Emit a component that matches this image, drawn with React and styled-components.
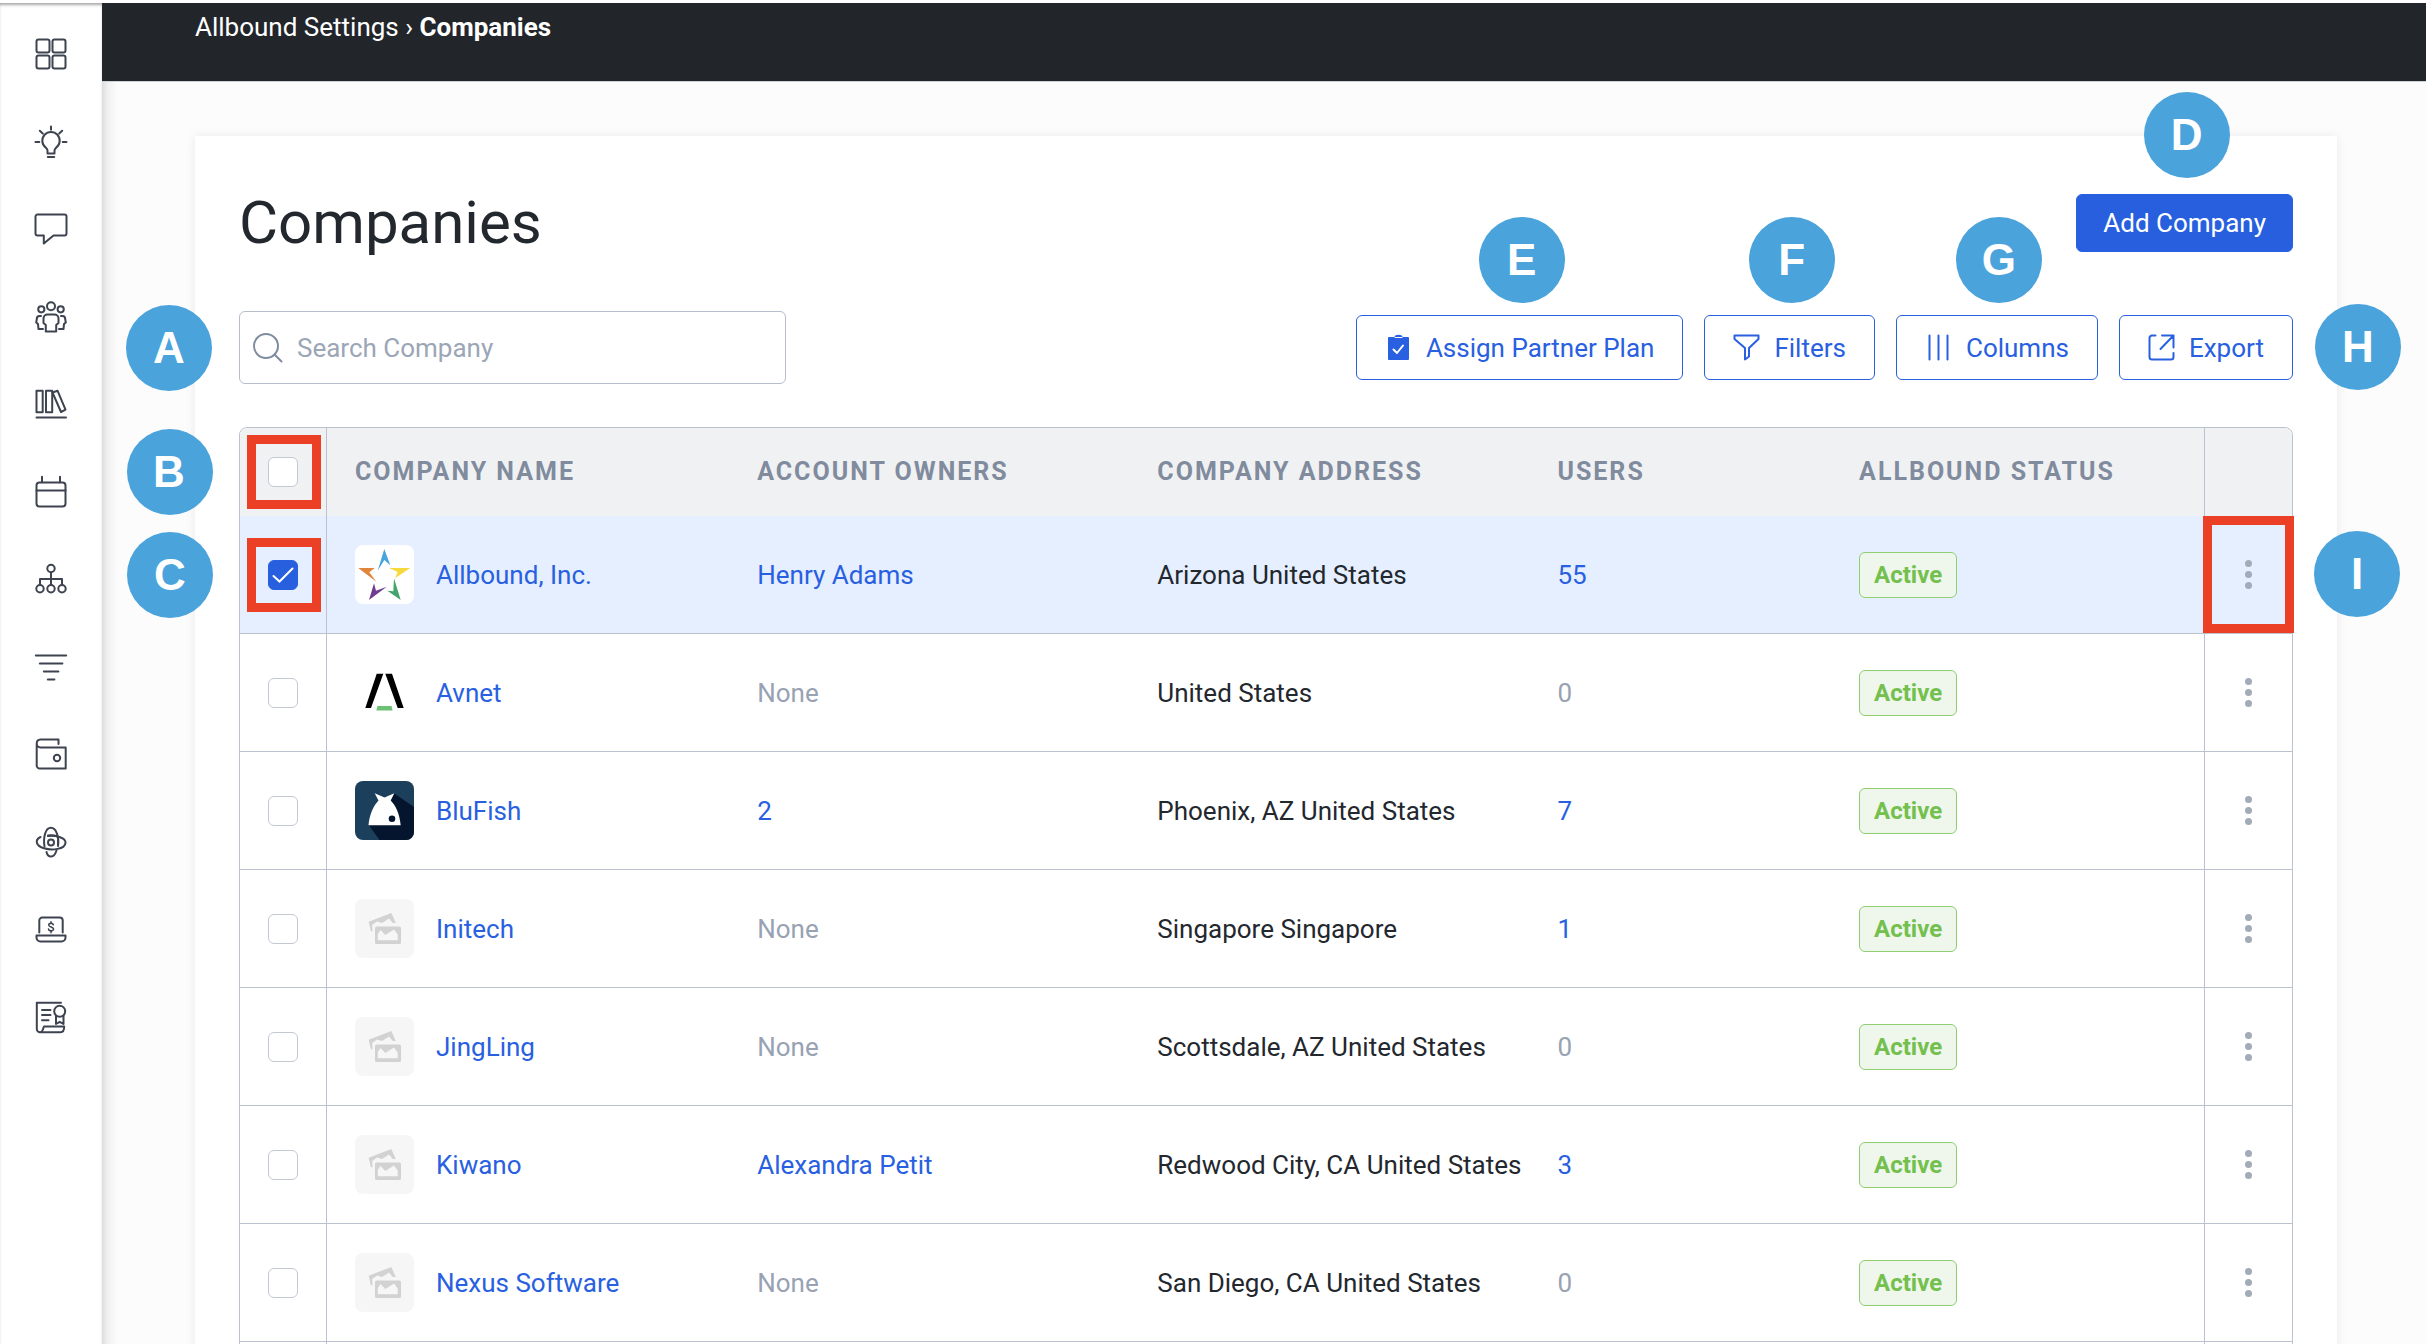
import React, { useState } from 'react'
import styled, { createGlobalStyle, css } from 'styled-components'

const GlobalStyle = createGlobalStyle`
  * {
    box-sizing: border-box;
  }

  body {
    margin: 0;
    background: #ffffff;
    color: #23272e;
    font-family: Roboto, 'Liberation Sans', sans-serif;
    font-size: 26px;
    line-height: 30px;
  }

  button,
  input {
    font: inherit;
  }
`

const Shell = styled.div`
  display: flex;
  height: 100vh;
  padding-top: 3px;
  overflow: hidden;
`

const Sidebar = styled.nav`
  flex: none;
  width: 102px;
  padding-top: 35px;
  background: #ffffff;
  box-shadow: inset 0 3px 3px -1px #a9a9a9;
`

const SidebarList = styled.ul`
  display: flex;
  flex-direction: column;
  align-items: center;
  justify-content: space-between;
  height: 74vh;
  margin: 0;
  padding: 0;
  list-style: none;
`

const SidebarLink = styled.a`
  display: block;
  width: 32px;
  height: 32px;
  color: #3d4450;

  svg {
    display: block;
    overflow: visible;
  }
`

const Main = styled.main`
  flex: 1;
  min-width: 0;
  background: linear-gradient(to right, #dedede, #f1f1f1 6px, #fcfcfc 16px);
`

const TopBar = styled.header`
  height: 79px;
  padding: 9px 93px 0;
  border-bottom: 1px solid #cdd1d8;
  background: #22262b;
  color: #ffffff;
`

const CrumbLink = styled.a`
  color: inherit;
  text-decoration: none;
`

const Card = styled.section`
  margin: 54px 89px 0 93px;
  padding: 52px 44px 44px;
  background: #ffffff;
  box-shadow: 0 0 10px rgba(0, 0, 0, 0.08);
`

const TitleRow = styled.div`
  display: flex;
  align-items: center;
  justify-content: space-between;
`

const Title = styled.h1`
  margin: 0;
  font-size: 60px;
  font-weight: 400;
  line-height: 70px;
`

const Toolbar = styled.div`
  display: flex;
  align-items: center;
  gap: 21px;
  margin: 53px 0 43px;
`

const Anchor = styled.div`
  position: relative;
`

const badgePlaces = {
  left: css`
    right: calc(100% + 27px);
    top: calc(50% - 43px);
  `,
  right: css`
    left: calc(100% + 22px);
    top: calc(50% - 44px);
  `,
  above: css`
    left: calc(50% - 41px);
    bottom: calc(100% + ${({ $gap }) => $gap || 12}px);
  `,
}

const Badge = styled.span`
  position: absolute;
  z-index: 2;
  display: flex;
  align-items: center;
  justify-content: center;
  width: 86px;
  height: 86px;
  border-radius: 50%;
  background: #4ba3dc;
  color: #ffffff;
  font-family: 'Liberation Sans', Arial, sans-serif;
  font-size: 44px;
  font-weight: 700;
  line-height: 50px;
  ${({ $place }) => badgePlaces[$place]}
`

const Outline = styled.span`
  position: absolute;
  z-index: 1;
  border: 9px solid #eb4025;
  pointer-events: none;
  ${({ $full }) =>
    $full
      ? css`
          inset: 0 -2px 0 -2px;
        `
      : css`
          left: calc(50% - 36px);
          top: calc(50% - 37px);
          width: 74px;
          height: 74px;
        `}
`

const SearchBox = styled.label`
  display: flex;
  align-items: center;
  gap: 14px;
  width: 547px;
  height: 73px;
  padding: 0 13px;
  border: 1px solid #b7bdcc;
  border-radius: 6px;
  background: #ffffff;
  color: #7f8b9f;
`

const SearchInput = styled.input`
  flex: 1;
  min-width: 0;
  padding: 0;
  border: 0;
  outline: 0;
  background: transparent;
  color: #23272e;

  &::placeholder {
    color: #9ba6b6;
    opacity: 1;
  }
`

const Spacer = styled.div`
  flex: 1;
`

const Button = styled.button`
  display: flex;
  align-items: center;
  gap: 14px;
  height: 65px;
  padding: 0 28px;
  border: 1px solid #2860e1;
  border-radius: 6px;
  background: #ffffff;
  color: #2860e1;
  white-space: nowrap;
`

const PrimaryButton = styled(Button)`
  height: 58px;
  padding: 0 26px;
  background: #275fdf;
  color: #ffffff;
`

const Table = styled.table`
  width: 100%;
  border: 1px solid #bcc1cf;
  border-radius: 8px;
  border-spacing: 0;
  table-layout: fixed;
`

const Col = styled.col`
  width: ${({ $width }) => $width};
`

const HeadCell = styled.th`
  position: relative;
  height: 88px;
  padding: 0 28px;
  background: #f0f1f3;
  color: #808b9e;
  font-size: 25px;
  font-weight: 700;
  letter-spacing: 2px;
  text-align: left;
  text-transform: uppercase;
  white-space: nowrap;

  &:first-child {
    padding: 0;
    border-right: 1px solid #bcc1cf;
    border-radius: 7px 0 0 0;
  }

  &:last-child {
    padding: 0;
    border-left: 1px solid #bcc1cf;
    border-radius: 0 7px 0 0;
  }
`

const Row = styled.tr`
  background: ${({ $selected }) => ($selected ? '#e6efff' : '#ffffff')};
`

const Cell = styled.td`
  position: relative;
  height: 118px;
  padding: 0 28px;
  border-bottom: 1px solid #bcc1cf;
  color: ${({ $muted }) => ($muted ? '#98a2b3' : 'inherit')};
  white-space: nowrap;

  &:first-child {
    padding: 0;
    border-right: 1px solid #bcc1cf;
  }

  &:last-child {
    padding: 0;
    border-left: 1px solid #bcc1cf;
  }
`

const CompanyCell = styled.div`
  display: flex;
  align-items: center;
  gap: 22px;
`

const Avatar = styled.span`
  display: block;
  width: 59px;
  height: 59px;
  border-radius: 8px;
  background: ${({ $color }) => $color};
  overflow: hidden;

  svg {
    display: block;
  }
`

const TextLink = styled.a`
  color: #2860e1;
  text-decoration: none;
`

const Checkbox = styled.input.attrs({ type: 'checkbox' })`
  display: block;
  width: 30px;
  height: 30px;
  margin: 0 auto;
  border: 1px solid #c3c8d3;
  border-radius: 6px;
  background: #ffffff;
  appearance: none;

  &:checked {
    border-color: #2860e1;
    background: #275fdf
      url("data:image/svg+xml,%3Csvg xmlns='http://www.w3.org/2000/svg' viewBox='0 0 28 28'%3E%3Cpath d='M4.500 15l6 5.500L23.500 7.500' fill='none' stroke='white' stroke-width='2' stroke-linecap='round'/%3E%3C/svg%3E")
      center / 28px 28px no-repeat;
  }
`

const Status = styled.span`
  display: inline-block;
  padding: 7px 14px;
  border: 1px solid #8fce72;
  border-radius: 6px;
  background: #eff6eb;
  color: #73c04e;
  font-weight: 700;
  font-size: 24px;
  vertical-align: middle;
`

const MenuButton = styled.button`
  display: flex;
  flex-direction: column;
  align-items: center;
  gap: 4px;
  margin: 0 auto;
  padding: 10px;
  border: 0;
  background: none;
`

const Dot = styled.span`
  width: 7px;
  height: 7px;
  border-radius: 50%;
  background: #a2abb8;
`

const sidebarIcons = [
  {
    label: 'Dashboard',
    art: (
      <>
        <rect x="1.500" y="1.500" width="13" height="13" rx="2" />
        <rect x="17.500" y="1.500" width="13" height="13" rx="2" />
        <rect x="1.500" y="17.500" width="13" height="13" rx="2" />
        <rect x="17.500" y="17.500" width="13" height="13" rx="2" />
      </>
    ),
  },
  {
    label: 'Ideas',
    art: (
      <>
        <path d="M12.500 27.500v-3c0-1.500-.8-2-1.800-3a8.700 8.700 0 1 1 10.600 0c-1 1-1.800 1.500-1.800 3v3z" />
        <path d="M12.800 31h6.400M16 .5v3.200M.5 16h3.800M27.700 16h3.800M4.800 4.800l3 2.800M27.200 4.800l-3 2.800" />
      </>
    ),
  },
  {
    label: 'Messages',
    art: (
      <path d="M2.500 1.500h27a2 2 0 0 1 2 2v17a2 2 0 0 1-2 2H18.500L8.800 30.500v-8H2.500a2 2 0 0 1-2-2v-17a2 2 0 0 1 2-2z" />
    ),
  },
  {
    label: 'Partners',
    art: (
      <>
        <circle cx="16" cy="5.300" r="4" />
        <circle cx="6.300" cy="8.300" r="3.100" />
        <circle cx="25.700" cy="8.300" r="3.100" />
        <path d="M12.500 13.500h7a4 4 0 0 1 4 4v4.500l-2.300 2v6.500H10.800V24l-2.300-2v-4.500a4 4 0 0 1 4-4z" />
        <path d="M6 15H4.500C2.500 15 1.800 16.500 1.800 18l-.6 3.500 1.800 1.600.5 5H8M26 15h1.500c2 0 2.700 1.500 2.700 3l.6 3.500-1.800 1.600-.5 5H24" />
      </>
    ),
  },
  {
    label: 'Library',
    art: (
      <>
        <rect x="1.500" y="2.800" width="6.200" height="21.500" />
        <rect x="11" y="2.800" width="6.200" height="21.500" />
        <path d="M17.500 4.500l5-1.800L30.500 21.700l-4.500 2.300zM1.500 29.500h29.500" />
      </>
    ),
  },
  {
    label: 'Calendar',
    art: (
      <>
        <rect x="1.500" y="6.500" width="29" height="24" rx="3" />
        <path d="M1.500 14.500h29M7 .8v5.500M25 .8v5.500" />
      </>
    ),
  },
  {
    label: 'Structure',
    art: (
      <>
        <circle cx="16" cy="5.500" r="3.700" />
        <circle cx="5" cy="25.800" r="3.700" />
        <circle cx="16" cy="25.800" r="3.700" />
        <circle cx="27" cy="25.800" r="3.700" />
        <path d="M16 9.500v12.500M5 21v-5h22v5" />
      </>
    ),
  },
  {
    label: 'Pipeline',
    art: <path d="M.8 4.500h30.400M4.800 12.500h22.600M8.800 20.500h14.600M12.800 28.500h6.600" />,
  },
  {
    label: 'Wallet',
    art: (
      <>
        <path d="M23.500 6V1.500H5.500a4 4 0 0 0-3.800 3.800v22.200a3 3 0 0 0 3 3h26V9.500H5.500A4 4 0 0 1 1.700 5.500" />
        <circle cx="22" cy="20" r="3.200" />
      </>
    ),
  },
  {
    label: 'Network',
    art: (
      <>
        <circle cx="16" cy="16.500" r="3" />
        <path d="M5.500 11C-1 14.500 1.500 20 9 22.300c8 2.400 21 1 21.500-5.500C30.700 11.500 20 9 13 10" />
        <path d="M21.500 24.500C19 32.500 13 32 11.500 26M23 20C24.500 11 21 1.800 16 1.800 10.500 1.800 8 11 9.500 20.500M13 9.500c3-.3 10-.3 10 2.500v8" />
      </>
    ),
  },
  {
    label: 'Commissions',
    art: (
      <>
        <path d="M4.300 19.500V7.500a3 3 0 0 1 3-3h17.400a3 3 0 0 1 3 3v12M1.500 22.500h29v2a4 4 0 0 1-4 4h-21a4 4 0 0 1-4-4z" />
        <path
          d="M18.300 11.800c-.5-2-4.600-1.900-4.600.2 0 2.600 4.900 1.500 4.900 4.100 0 2.300-4.800 2.200-5.100 0M16 8.700v1.700M16 18v1.700"
          strokeWidth="1.500"
        />
      </>
    ),
  },
  {
    label: 'Certificates',
    art: (
      <>
        <path d="M26 1.800H1.800v26.200a3.200 3.200 0 0 0 3.200 3.200h20.500c2.500 0 3.700-2 3.700-5.700H9c-.8 0-.6 5.700-4 5.700" />
        <path d="M7 9h8.500M7 14h8.500M7 19.200h6.500M21 14.800V23l3.700-2.200L28.500 23v-8.200" />
        <circle cx="24.700" cy="10.300" r="5.500" />
      </>
    ),
  },
]

const logos = {
  allbound: {
    color: '#ffffff',
    art: (
      <>
        <path fill="#46a5dc" d="M29.300 4l6 16.300-6-5.300-6.600 10.700z" />
        <path fill="#f6da3c" d="M34 23h21.300L40 33.300l2.700-6.300z" />
        <path fill="#43a56b" d="M39 33.300L45.700 55 32.300 45.700l6 .6z" />
        <path fill="#6f3c90" d="M19 38.300L14 55l17.700-13.300-10.700 4z" />
        <path fill="#e0853a" d="M3.300 23h16.400l-5.400 4.300 7 9.400z" />
      </>
    ),
  },
  avnet: {
    color: '#ffffff',
    art: (
      <>
        <path d="M10.300 45H16L28.300 10.700h-6.600zM30.300 10.700H37L48.700 45h-6z" />
        <path fill="#6cc177" d="M22.500 43h14l1 4.500H21.300z" />
      </>
    ),
  },
  blufish: {
    color: '#1c3f5b',
    art: (
      <>
        <path fill="#04152d" d="M39 12.300L59 26v33H24.500L13.700 44l20-20z" />
        <path
          fill="#ffffff"
          d="M13.500 44.200C14.500 33 18.500 25 23.500 19.500L19.700 12.300l9.800 4.200 9.800-4.200-3.600 7.200C41 25 44.700 33 45.700 44.200z"
        />
        <circle cx="37" cy="37.700" r="3.300" fill="#04152d" />
      </>
    ),
  },
  empty: {
    color: '#f6f6f6',
    art: (
      <>
        <path
          fill="#d2d2d2"
          d="M13.700 22.700L36.300 14l4.500 10h-3l-3.800-4.500L27 24l-5-1.500-4.800 3.500.3 6.500-1.700-.5z"
        />
        <rect x="20" y="27.500" width="26" height="17.500" rx="1.500" fill="#d2d2d2" />
        <path fill="#f6f6f6" d="M22.800 41.200V35l2.700-4 4.800 5 8.700-5.500 3.700 5v5.700z" />
      </>
    ),
  },
}

const companies = [
  { name: 'Allbound, Inc.', logo: 'allbound', owner: 'Henry Adams', address: 'Arizona United States', users: 55 },
  { name: 'Avnet', logo: 'avnet', address: 'United States', users: 0 },
  { name: 'BluFish', logo: 'blufish', owner: '2', address: 'Phoenix, AZ United States', users: 7 },
  { name: 'Initech', logo: 'empty', address: 'Singapore Singapore', users: 1 },
  { name: 'JingLing', logo: 'empty', address: 'Scottsdale, AZ United States', users: 0 },
  { name: 'Kiwano', logo: 'empty', owner: 'Alexandra Petit', address: 'Redwood City, CA United States', users: 3 },
  { name: 'Nexus Software', logo: 'empty', address: 'San Diego, CA United States', users: 0 },
]

function LineIcon({ size = 27, children }) {
  return (
    <svg
      width={size}
      height={size}
      viewBox={`0 0 ${size} ${size}`}
      fill="none"
      stroke="currentColor"
      strokeWidth="2"
      strokeLinecap="round"
      strokeLinejoin="round"
      aria-hidden="true"
    >
      {children}
    </svg>
  )
}

function ToolButton({ label, badge, place = 'above', children }) {
  return (
    <Anchor>
      <Button type="button">
        <LineIcon>{children}</LineIcon>
        {label}
      </Button>
      <Badge $place={place}>{badge}</Badge>
    </Anchor>
  )
}

function CompanyRow({ company, first, selected, onToggle }) {
  const { name, logo, owner, address, users } = company
  return (
    <Row $selected={selected}>
      <Cell>
        <Checkbox aria-label={`Select ${name}`} checked={selected} onChange={onToggle} />
        {first && (
          <>
            <Outline />
            <Badge $place="left">C</Badge>
          </>
        )}
      </Cell>
      <Cell>
        <CompanyCell>
          <Avatar $color={logos[logo].color}>
            <svg width="59" height="59" viewBox="0 0 59 59" aria-hidden="true">
              {logos[logo].art}
            </svg>
          </Avatar>
          <TextLink href="#company">{name}</TextLink>
        </CompanyCell>
      </Cell>
      <Cell $muted={!owner}>{owner ? <TextLink href="#owners">{owner}</TextLink> : 'None'}</Cell>
      <Cell>{address}</Cell>
      <Cell $muted={!users}>{users ? <TextLink href="#users">{users}</TextLink> : users}</Cell>
      <Cell>
        <Status>Active</Status>
      </Cell>
      <Cell>
        <MenuButton type="button" aria-label={`Actions for ${name}`}>
          <Dot />
          <Dot />
          <Dot />
        </MenuButton>
        {first && (
          <>
            <Outline $full />
            <Badge $place="right">I</Badge>
          </>
        )}
      </Cell>
    </Row>
  )
}

export default function App() {
  const [selected, setSelected] = useState(['Allbound, Inc.'])
  const allSelected = selected.length === companies.length

  const toggle = (name) =>
    setSelected(selected.includes(name) ? selected.filter((n) => n !== name) : [...selected, name])

  return (
    <Shell>
      <GlobalStyle />
      <Sidebar aria-label="Main">
        <SidebarList>
          {sidebarIcons.map(({ label, art }) => (
            <li key={label}>
              <SidebarLink href="#menu" aria-label={label}>
                <LineIcon size={32}>{art}</LineIcon>
              </SidebarLink>
            </li>
          ))}
        </SidebarList>
      </Sidebar>
      <Main>
        <TopBar>
          <CrumbLink href="#settings">Allbound Settings</CrumbLink> › <strong>Companies</strong>
        </TopBar>
        <Card>
          <TitleRow>
            <Title>Companies</Title>
            <Anchor>
              <PrimaryButton type="button">Add Company</PrimaryButton>
              <Badge $place="above" $gap={16}>
                D
              </Badge>
            </Anchor>
          </TitleRow>
          <Toolbar>
            <Anchor>
              <SearchBox>
                <LineIcon size={30}>
                  <circle cx="13" cy="13" r="12" />
                  <path d="M21.500 21.500l7 7" />
                </LineIcon>
                <SearchInput type="text" placeholder="Search Company" aria-label="Search Company" />
              </SearchBox>
              <Badge $place="left">A</Badge>
            </Anchor>
            <Spacer />
            <ToolButton label="Assign Partner Plan" badge="E">
              <path
                d="M4 3h5.500c0-3 8-3 8 0H23a1 1 0 0 1 1 1v21a1 1 0 0 1-1 1H4a1 1 0 0 1-1-1V4a1 1 0 0 1 1-1z"
                fill="currentColor"
                stroke="none"
              />
              <path d="M10 3.500h7" stroke="#ffffff" strokeWidth="1" />
              <path d="M8.500 15.500l3.500 3.500 6-7.500" stroke="#ffffff" />
            </ToolButton>
            <ToolButton label="Filters" badge="F">
              <path d="M1.500 1.500h24v3.500l-9.500 9v8.500l-4 3V14L1.500 5z" />
            </ToolButton>
            <ToolButton label="Columns" badge="G">
              <path d="M4.500 1.500v24M13.500 1.500v24M22.500 1.500v24" />
            </ToolButton>
            <ToolButton label="Export" badge="H" place="right">
              <path d="M7.500 1.500H4A2.500 2.500 0 0 0 1.500 4v19A2.500 2.500 0 0 0 4 25.500h19a2.500 2.500 0 0 0 2.500-2.500v-4M14 1.500h11.500v12M25.500 1.500L12.500 15" />
            </ToolButton>
          </Toolbar>
          <Table>
            <colgroup>
              <Col $width="87px" />
              <Col $width="19.6%" />
              <Col $width="19.5%" />
              <Col $width="19.5%" />
              <Col $width="14.7%" />
              <Col />
              <Col $width="88px" />
            </colgroup>
            <thead>
              <tr>
                <HeadCell>
                  <Checkbox
                    aria-label="Select all companies"
                    checked={allSelected}
                    onChange={() => setSelected(allSelected ? [] : companies.map((c) => c.name))}
                  />
                  <Outline />
                  <Badge $place="left">B</Badge>
                </HeadCell>
                <HeadCell>Company Name</HeadCell>
                <HeadCell>Account Owners</HeadCell>
                <HeadCell>Company Address</HeadCell>
                <HeadCell>Users</HeadCell>
                <HeadCell>Allbound Status</HeadCell>
                <HeadCell aria-label="Actions" />
              </tr>
            </thead>
            <tbody>
              {companies.map((company, i) => (
                <CompanyRow
                  key={company.name}
                  company={company}
                  first={i === 0}
                  selected={selected.includes(company.name)}
                  onToggle={() => toggle(company.name)}
                />
              ))}
              {/* blank row under the last company */}
              <Row aria-hidden="true">
                <Cell />
                <Cell colSpan={5} />
                <Cell />
              </Row>
            </tbody>
          </Table>
        </Card>
      </Main>
    </Shell>
  )
}
